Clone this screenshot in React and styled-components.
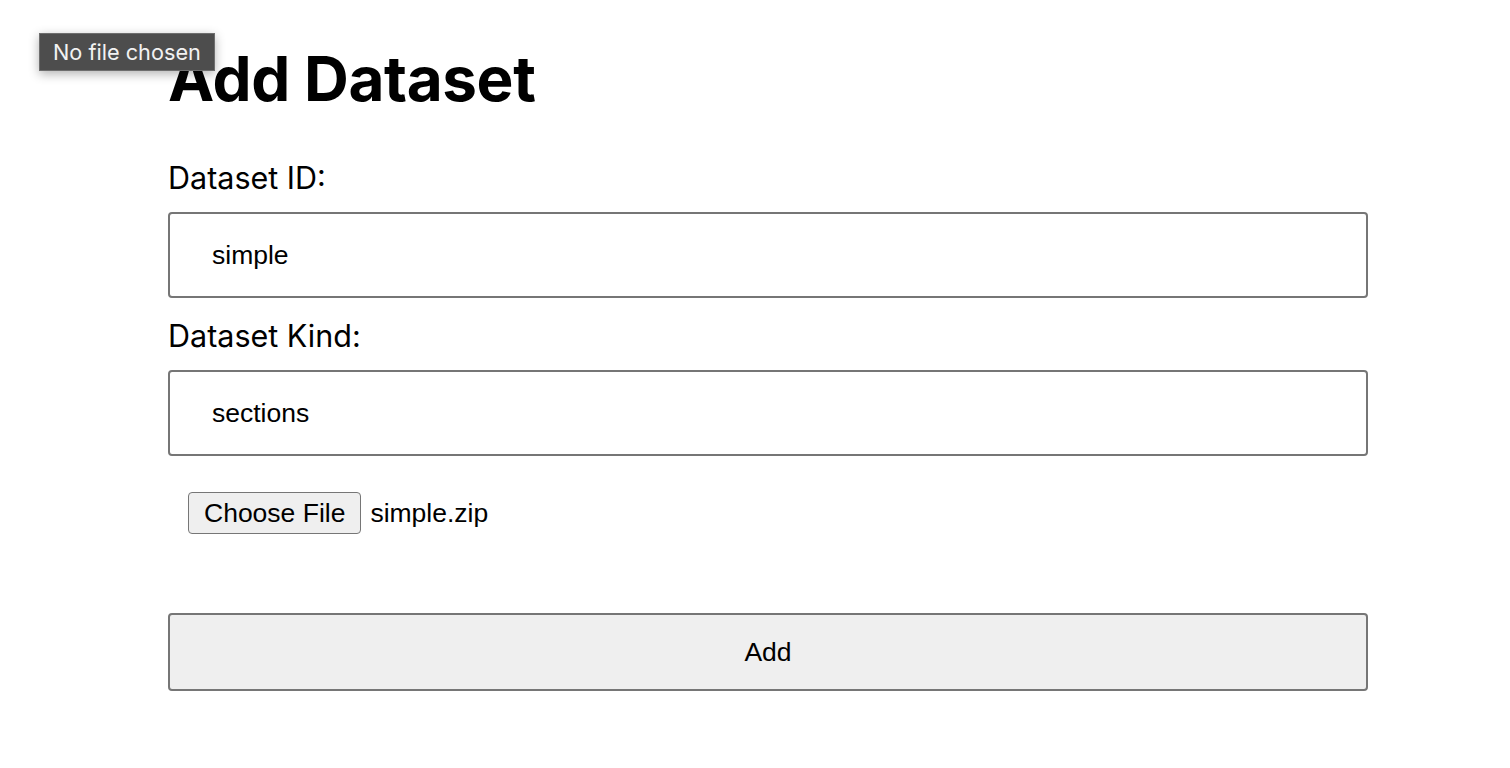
import React from "react"
import styled, { createGlobalStyle } from "styled-components"

const GlobalStyle = createGlobalStyle`
  html, body {
    margin: 0;
    padding: 0;
    background: #ffffff;
  }
  body {
    font-family: Inter, "Liberation Sans", sans-serif;
    color: #000000;
  }
`

const Page = styled.div`
  position: relative;
  width: 1510px;
  height: 768px;
  overflow: hidden;
`

const Form = styled.form`
  width: 1200px;
  margin: 0 0 0 168px;
  padding-top: 41px;
  display: flex;
  flex-direction: column;
`

const Title = styled.h1`
  margin: 0 0 43px;
  font-family: Inter, sans-serif;
  font-weight: 700;
  font-size: 62px;
  line-height: 76px;
  letter-spacing: -0.4px;
`

const Label = styled.label`
  font-family: Inter, sans-serif;
  font-size: 30.5px;
  line-height: 36px;
  margin-bottom: 16px;
`

const TextInput = styled.input`
  box-sizing: border-box;
  width: 100%;
  height: 86px;
  margin: 0 0 ${p => p.$gap}px;
  padding: 0 0 0 42px;
  border: 2px solid #767676;
  border-radius: 4px;
  font-family: "Liberation Sans", Arial, sans-serif;
  font-size: 26.5px;
  color: #000;
  background: #fff;
  outline: none;
`

const FileRow = styled.div`
  display: flex;
  align-items: center;
  gap: 9px;
  margin: 36px 0 0 20px;
  height: 42px;
`

const FileButton = styled.button`
  box-sizing: border-box;
  height: 42px;
  padding: 0 15px;
  border: 1.5px solid #767676;
  border-radius: 4px;
  background: #efefef;
  font-family: "Liberation Sans", Arial, sans-serif;
  font-size: 26.5px;
  color: #000;
`

const FileName = styled.span`
  font-family: "Liberation Sans", Arial, sans-serif;
  font-size: 26.5px;
`

const SubmitButton = styled.button`
  box-sizing: border-box;
  width: 100%;
  height: 78px;
  margin-top: 79px;
  border: 2px solid #767676;
  border-radius: 4px;
  background: #efefef;
  font-family: "Liberation Sans", Arial, sans-serif;
  font-size: 26.5px;
  color: #000;
`

const Tooltip = styled.div`
  position: absolute;
  left: 39px;
  top: 33px;
  box-sizing: border-box;
  height: 38px;
  padding: 0 13px;
  display: flex;
  align-items: center;
  background: #4d4d4d;
  border: 1px solid #6e6e6e;
  color: #f2f2f2;
  font-family: Inter, sans-serif;
  font-size: 21.7px;
  box-shadow: 0 3px 10px rgba(0, 0, 0, 0.3);
  z-index: 2;
`

const App = () => (
  <Page>
    <GlobalStyle />
    <Form onSubmit={e => e.preventDefault()}>
      <Title>Add Dataset</Title>
      <Label>Dataset ID:</Label>
      <TextInput defaultValue="simple" $gap={20} />
      <Label>Dataset Kind:</Label>
      <TextInput defaultValue="sections" $gap={0} />
      <FileRow>
        <FileButton type="button">Choose File</FileButton>
        <FileName>simple.zip</FileName>
      </FileRow>
      <SubmitButton type="submit">Add</SubmitButton>
    </Form>
    <Tooltip>No file chosen</Tooltip>
  </Page>
)

export default App
